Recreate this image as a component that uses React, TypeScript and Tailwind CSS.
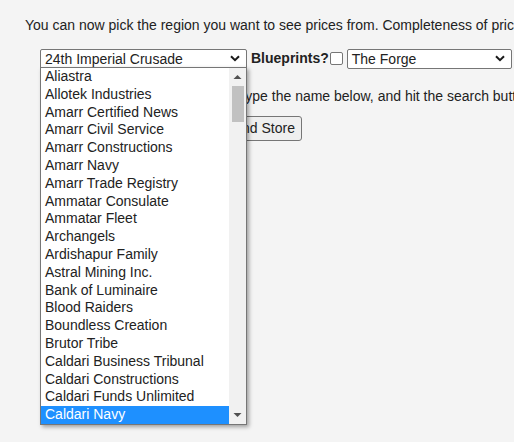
import React from "react";

const corps = [
  "Aliastra",
  "Allotek Industries",
  "Amarr Certified News",
  "Amarr Civil Service",
  "Amarr Constructions",
  "Amarr Navy",
  "Amarr Trade Registry",
  "Ammatar Consulate",
  "Ammatar Fleet",
  "Archangels",
  "Ardishapur Family",
  "Astral Mining Inc.",
  "Bank of Luminaire",
  "Blood Raiders",
  "Boundless Creation",
  "Brutor Tribe",
  "Caldari Business Tribunal",
  "Caldari Constructions",
  "Caldari Funds Unlimited",
  "Caldari Navy",
];

function Chevron() {
  return (
    <svg width="10" height="7" viewBox="0 0 10 7" className="shrink-0">
      <path d="M1 1.2 L5 5.2 L9 1.2" fill="none" stroke="#1a1a1a" strokeWidth="2" />
    </svg>
  );
}

function Select({ value, width }: { value: string; width: string }) {
  return (
    <div
      className={`${width} h-[20px] flex items-center justify-between pl-[4px] pr-[6px] bg-white border border-[#767676] rounded-[2px] text-[14px] text-[#222]`}
    >
      <span className="leading-none">{value}</span>
      <Chevron />
    </div>
  );
}

export default function App() {
  return (
    <div className="w-[514px] h-[442px] overflow-hidden bg-[#f4f4f4] font-['Liberation_Sans',Arial,sans-serif] text-[#222] pl-[25px] pt-[16px]">
      <p className="whitespace-nowrap text-[14px] leading-[18px]">
        You can now pick the region you want to see prices from. Completeness of prices may vary.
      </p>

      <div className="relative flex items-center ml-[15px] mt-[14px] w-[480px]">
        <Select value="24th Imperial Crusade" width="w-[207px]" />
        <span className="font-bold text-[14px] ml-[4px]">Blueprints?</span>
        <span className="w-[13px] h-[13px] border border-[#767676] rounded-[2px] bg-white ml-[1px] mr-[4px]" />
        <Select value="The Forge" width="w-[165px]" />

        {/* open dropdown */}
        <div className="absolute left-0 top-[19px] z-10 w-[207px] h-[358px] bg-white border border-[#767676] shadow-[2px_2px_4px_rgba(0,0,0,0.35)] flex">
          <div className="flex-1 flex flex-col">
            {corps.map((c) => (
              <div
                key={c}
                className={`h-[17.8px] pl-[4px] text-[14px] leading-[17.8px] whitespace-nowrap ${
                  c === "Caldari Navy" ? "bg-[#1e90ff] text-white" : "text-[#222]"
                }`}
              >
                {c}
              </div>
            ))}
          </div>
          <div className="w-[17px] bg-[#f1f1f1] flex flex-col items-center">
            <svg width="9" height="17" viewBox="0 0 9 17" className="shrink-0">
              <path d="M0.5 11 L4.5 7 L8.5 11 Z" fill="#505050" />
            </svg>
            <div className="w-[12px] h-[36px] bg-[#c1c1c1] mt-[1px]" />
            <div className="flex-1" />
            <svg width="9" height="17" viewBox="0 0 9 17" className="shrink-0">
              <path d="M0.5 6 L4.5 10 L8.5 6 Z" fill="#505050" />
            </svg>
          </div>
        </div>
      </div>

      <p className="whitespace-nowrap text-[14px] leading-[18px] mt-[18px] ml-[18px]">
        If you want the price of an item, type the name below, and hit the search button.
      </p>

      <div className="flex items-center gap-[4px] ml-[15px] mt-[11px]">
        <span className="w-[152px] h-[21px] bg-white border border-[#767676] rounded-[2px]" />
        <button className="h-[25px] w-[106px] bg-[#efefef] border border-[#767676] rounded-[3px] text-[14px] text-[#222]">
          Find and Store
        </button>
      </div>
    </div>
  );
}
